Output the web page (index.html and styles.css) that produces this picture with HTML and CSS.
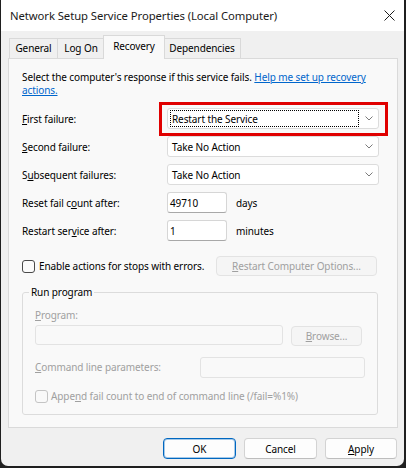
FILE: index.html
```html
<!DOCTYPE html>
<html lang="en">
<head>
<meta charset="utf-8">
<title>Network Setup Service Properties (Local Computer)</title>
<link rel="stylesheet" href="styles.css">
</head>
<body>
<div class="window">
  <div class="titlebar">
    <span class="title">Network Setup Service Properties (Local Computer)</span>
    <svg class="close" width="11" height="11" viewBox="0 0 11 11"><path d="M0.5 0.5L10.5 10.5M10.5 0.5L0.5 10.5" stroke="#1c1c1c" stroke-width="1" fill="none"/></svg>
  </div>
  <div class="tabs">
    <div class="tab t-general">General</div>
    <div class="tab t-logon">Log On</div>
    <div class="tab t-recovery active">Recovery</div>
    <div class="tab t-deps">Dependencies</div>
  </div>
  <div class="panel">
    <p class="intro">Select the computer's response if this service fails. <a class="link">Help me set up recovery<br>actions.</a></p>
    <div class="form">
      <span class="label"><u>F</u>irst failure:</span>
      <div class="combo"><span class="val focus">Restart the Service</span><svg class="chev" width="8" height="5" viewBox="0 0 8 5"><path d="M0.5 0.5L4 4L7.5 0.5" fill="none" stroke="#7a7a7a" stroke-width="1"/></svg></div>
      <span class="label"><u>S</u>econd failure:</span>
      <div class="combo"><span class="val">Take No Action</span><svg class="chev" width="8" height="5" viewBox="0 0 8 5"><path d="M0.5 0.5L4 4L7.5 0.5" fill="none" stroke="#7a7a7a" stroke-width="1"/></svg></div>
      <span class="label">S<u>u</u>bsequent failures:</span>
      <div class="combo"><span class="val">Take No Action</span><svg class="chev" width="8" height="5" viewBox="0 0 8 5"><path d="M0.5 0.5L4 4L7.5 0.5" fill="none" stroke="#7a7a7a" stroke-width="1"/></svg></div>
      <span class="label">Reset fail c<u>o</u>unt after:</span>
      <div class="inline"><div class="field">49710</div><span class="unit">days</span></div>
      <span class="label">Restart ser<u>v</u>ice after:</span>
      <div class="inline"><div class="field">1</div><span class="unit">minutes</span></div>
    </div>
    <div class="errrow">
      <span class="check"></span>
      <span class="checklabel">Enable actions for stops with errors.</span>
      <div class="btn disabled restart"><u>R</u>estart Computer Options...</div>
    </div>
    <fieldset class="group">
      <legend class="legend">Run program</legend>
      <div class="group-body">
        <div class="dis"><u>P</u>rogram:</div>
        <div class="prog-row">
          <div class="field disfield prog"></div>
          <div class="btn disabled browse"><u>B</u>rowse...</div>
        </div>
        <div class="cmd-row">
          <span class="dis"><u>C</u>ommand line parameters:</span>
          <div class="field disfield cmd"></div>
        </div>
        <div class="append-row">
          <span class="check discheck"></span>
          <span class="dis appendlabel">Appe<u>n</u>d fail count to end of command line (/fail=%1%)</span>
        </div>
      </div>
    </fieldset>
  </div>
  <div class="actions">
    <div class="btn ok">OK</div>
    <div class="btn cancel">Cancel</div>
    <div class="btn apply"><u>A</u>pply</div>
  </div>
</div>
<div class="highlight"></div>
</body>
</html>
```
FILE: styles.css
```css
* { box-sizing: border-box; }
html, body { margin: 0; padding: 0; }
body {
  background: #1f1f1f;
  width: 406px;
  height: 468px;
  overflow: hidden;
  position: relative;
  font-family: "Noto Sans", "Open Sans", sans-serif;
  font-size: 10px;
  letter-spacing: -0.1px;
  color: #000;
}
.window {
  margin-left: 1px;
  width: 403px;
  height: 466px;
  background: #f0f0f0;
  border-radius: 0 0 7px 7px;
  display: flex;
  flex-direction: column;
  overflow: hidden;
}
.titlebar {
  height: 31px;
  flex: none;
  background: #ffffff;
  display: flex;
  align-items: center;
  justify-content: space-between;
  padding: 0 9px 0 9px;
}
.title { font-size: 11.3px; letter-spacing: -0.08px; color: #1a1a1a; }
.close { display: block; }

.tabs {
  height: 27px;
  flex: none;
  display: flex;
  align-items: flex-end;
  padding-left: 8px;
}
.tab {
  height: 20px;
  border: 1px solid #d9d9d9;
  border-bottom: 0;
  background: #f0f0f0;
  display: flex;
  align-items: center;
  justify-content: center;
  margin-right: -1px;
  padding-bottom: 1px;
}
.t-general { width: 49px; }
.t-logon { width: 48px; }
.t-recovery {
  width: 62px;
  height: 24px;
  margin-left: -1px;
  margin-right: -2px;
  margin-bottom: -1px;
  background: #f9f9f9;
  position: relative;
  z-index: 1;
  padding-bottom: 3px;
}
.t-deps { width: 78px; }

.panel {
  flex: none;
  margin-left: 7px;
  width: 390px;
  height: 370px;
  background: #f9f9f9;
  border: 1px solid #dadada;
  padding: 12px 0 0 13px;
}
.intro { margin: 0 0 11px; line-height: 13px; white-space: nowrap; }
.link { color: #0066cc; text-decoration: underline; }

.form {
  display: grid;
  grid-template-columns: 145px auto;
  grid-auto-rows: 21px;
  row-gap: 7px;
  align-items: center;
}
.combo {
  width: 212px;
  height: 21px;
  background: #ffffff;
  border: 1px solid #dcdcdc;
  border-radius: 3px;
  display: flex;
  align-items: center;
  justify-content: space-between;
  padding: 0 5px 0 2px;
}
.val {
  border: 1px solid transparent;
  height: 17px;
  display: flex;
  align-items: center;
  padding-left: 1px;
  flex: 1;
  margin-right: 6px;
}
.val.focus { border: 1px dotted #000; }
.chev { display: block; flex: none; }
.inline { display: flex; align-items: center; }
.field {
  width: 60px;
  height: 21px;
  background: #ffffff;
  border: 1px solid #d6d6d6;
  border-bottom-color: #a8a8a8;
  border-radius: 3px;
  padding-left: 2px;
  display: flex;
  align-items: center;
}
.unit { margin-left: 9px; }

.errrow {
  display: flex;
  align-items: center;
  height: 20px;
  margin-top: 15px;
}
.check {
  width: 13px;
  height: 13px;
  border: 1px solid #4a4a4a;
  border-radius: 3px;
  background: #fbfbfb;
  flex: none;
}
.checklabel { margin-left: 4px; }
.btn {
  height: 21px;
  border: 1px solid #d3d3d3;
  border-bottom-color: #bdbdbd;
  border-radius: 4px;
  background: #fdfdfd;
  display: flex;
  align-items: center;
  justify-content: center;
  flex: none;
}
.btn.disabled {
  color: #a0a0a0;
  background: #f5f5f5;
  border-color: #e3e3e3;
}
.restart { width: 161px; height: 20px; margin-left: auto; margin-right: 20px; }

.group {
  margin: 10px 0 0;
  padding: 0;
  width: 356px;
  border: 1px solid #dcdcdc;
  border-radius: 3px;
}
.legend {
  padding: 0 2px;
  margin-left: 6px;
  line-height: 13px;
}
.group-body { padding: 10px 12px 11px; }
.dis { color: #a0a0a0; line-height: 13px; }
.prog-row { display: flex; margin-top: 3px; }
.disfield {
  background: #f9f9f9;
  border-color: #e3e3e3;
}
.prog { width: 248px; height: 20px; }
.browse { width: 71px; height: 20px; margin-left: 8px; margin-top: 1px; }
.cmd-row { display: flex; align-items: center; margin-top: 11px; }
.cmd { width: 165px; margin-left: auto; }
.append-row { display: flex; align-items: center; height: 14px; margin-top: 11px; }
.discheck { border-color: #c4c4c4; background: #f9f9f9; }
.appendlabel { margin-left: 3px; }

.actions {
  display: flex;
  justify-content: flex-end;
  gap: 8px;
  padding-right: 7px;
  margin-top: 10px;
}
.ok {
  width: 73px;
  border-color: #0067c0;
  box-shadow: inset 0 0 0 1px rgba(0, 103, 192, 0.35);
}
.cancel { width: 73px; }
.apply { width: 72px; }

.highlight {
  position: absolute;
  left: 159px;
  top: 102px;
  width: 229px;
  height: 34px;
  border: 3px solid #e00000;
}
```
